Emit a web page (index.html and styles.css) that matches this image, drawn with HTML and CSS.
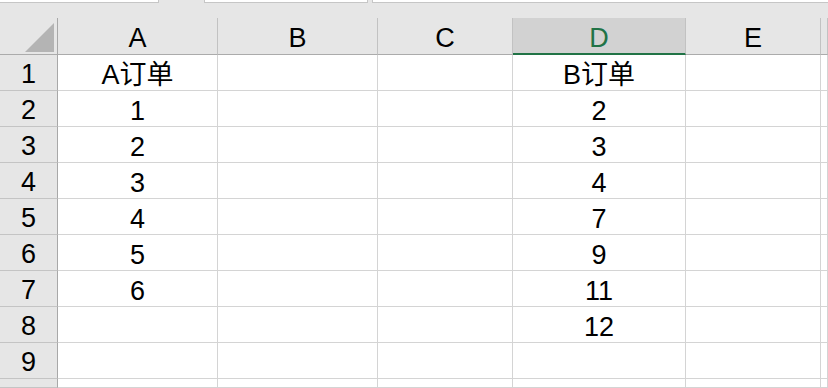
FILE: index.html
```html
<!DOCTYPE html>
<html lang="zh-CN">
<head>
  <meta charset="UTF-8" />
  <title>订单对比</title>
  <link rel="stylesheet" href="styles.css">
</head>
<body>

  <div class="toolbar">
    <div class="box box-name"></div>
    <div class="box box-mid"></div>
    <div class="box box-formula"></div>
  </div>

  <div class="sheet">
    <div class="hd corner"><span class="corner-mark"></span></div>
    <div class="hd col">A</div>
    <div class="hd col">B</div>
    <div class="hd col">C</div>
    <div class="hd col active">D</div>
    <div class="hd col">E</div>
    <div class="hd col"></div>

    <div class="rn">1</div><div class="cell">A订单</div><div class="cell"></div><div class="cell"></div><div class="cell">B订单</div><div class="cell"></div><div class="cell"></div>
    <div class="rn">2</div><div class="cell">1</div><div class="cell"></div><div class="cell"></div><div class="cell">2</div><div class="cell"></div><div class="cell"></div>
    <div class="rn">3</div><div class="cell">2</div><div class="cell"></div><div class="cell"></div><div class="cell">3</div><div class="cell"></div><div class="cell"></div>
    <div class="rn">4</div><div class="cell">3</div><div class="cell"></div><div class="cell"></div><div class="cell">4</div><div class="cell"></div><div class="cell"></div>
    <div class="rn">5</div><div class="cell">4</div><div class="cell"></div><div class="cell"></div><div class="cell">7</div><div class="cell"></div><div class="cell"></div>
    <div class="rn">6</div><div class="cell">5</div><div class="cell"></div><div class="cell"></div><div class="cell">9</div><div class="cell"></div><div class="cell"></div>
    <div class="rn">7</div><div class="cell">6</div><div class="cell"></div><div class="cell"></div><div class="cell">11</div><div class="cell"></div><div class="cell"></div>
    <div class="rn">8</div><div class="cell"></div><div class="cell"></div><div class="cell"></div><div class="cell">12</div><div class="cell"></div><div class="cell"></div>
    <div class="rn">9</div><div class="cell"></div><div class="cell"></div><div class="cell"></div><div class="cell"></div><div class="cell"></div><div class="cell"></div>
    <!-- row 10 only peeks in at the bottom edge -->
    <div class="rn"></div><div class="cell"></div><div class="cell"></div><div class="cell"></div><div class="cell"></div><div class="cell"></div><div class="cell"></div>
  </div>

</body>
</html>
```

FILE: styles.css
```css
* {
  box-sizing: border-box;
}
body {
  margin: 0;
  height: 388px;
  overflow: hidden;
  background: #e6e6e6;
  font-family: "Liberation Sans", "Noto Sans CJK SC", sans-serif;
  font-size: 27px;
  color: #000;
}
.toolbar {
  height: 18px;
  display: flex;
  align-items: flex-start;
}
.box {
  height: 3px;
  background: #fff;
  border: 1px solid #c6c6c6;
  border-top: none;
}
.box-name {
  width: 159px;
  border-left: none;
}
.box-mid {
  width: 164px;
  margin-left: 45px;
}
.box-formula {
  flex: 1;
  margin-left: 4px;
  border-right: none;
}
.sheet {
  height: 370px;
  overflow: hidden;
  display: grid;
  grid-template-columns: 58px 160px 160px 135px 173px 135px 1fr;
  grid-template-rows: 37px repeat(9, 36px) 9px;
}
.hd {
  background: #e6e6e6;
  border-bottom: 1px solid #ababab;
  text-align: center;
  line-height: 40px;
  overflow: hidden;
}
.col {
  border-right: 1px solid #c2c2c2;
}
.col.active {
  background: #d2d2d2;
  color: #217346;
  border-bottom: 2px solid #217346;
}
.corner {
  position: relative;
  border-right: 1px solid #a8a8a8;
}
.corner-mark {
  position: absolute;
  right: 3px;
  bottom: 2px;
  width: 29px;
  height: 29px;
  background: #b4b4b4;
  clip-path: polygon(100% 0, 100% 100%, 0 100%);
}
.rn {
  background: #e6e6e6;
  border-right: 1px solid #a8a8a8;
  border-bottom: 1px solid #c4c4c4;
  text-align: center;
  line-height: 39px;
  overflow: hidden;
}
.cell {
  background: #fff;
  border-right: 1px solid #d4d4d4;
  border-bottom: 1px solid #d4d4d4;
  text-align: center;
  line-height: 40px;
  white-space: nowrap;
  overflow: hidden;
}
```
